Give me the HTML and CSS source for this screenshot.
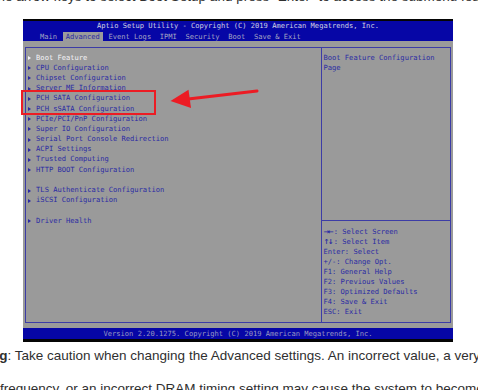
FILE: index.html
```html
<!DOCTYPE html>
<html lang="en">
<head>
    <meta charset="UTF-8">
    <meta name="viewport" content="width=device-width, initial-scale=1.0">
    <title>Advanced Setup</title>
    <link rel="stylesheet" href="styles.css">
</head>
<body>
    <div class="page">
        <p class="lead">Use the arrow keys to select Boot Setup and press "Enter" to access the submenu features.</p>

        <div class="bios">
            <div class="bios-title">Aptio Setup Utility - Copyright (C) 2019 American Megatrends, Inc.</div>
            <div class="bios-menu">
                <span>Main</span>
                <span class="active">Advanced</span>
                <span>Event Logs</span>
                <span>IPMI</span>
                <span>Security</span>
                <span>Boot</span>
                <span>Save &amp; Exit</span>
            </div>
            <div class="bios-body">
                <div class="panel">
                    <ul class="items">
                        <li class="sel">Boot Feature</li>
                        <li>CPU Configuration</li>
                        <li>Chipset Configuration</li>
                        <li>Server ME Information</li>
                        <li>PCH SATA Configuration</li>
                        <li>PCH sSATA Configuration</li>
                        <li>PCIe/PCI/PnP Configuration</li>
                        <li>Super IO Configuration</li>
                        <li>Serial Port Console Redirection</li>
                        <li>ACPI Settings</li>
                        <li>Trusted Computing</li>
                        <li>HTTP BOOT Configuration</li>
                        <li class="blank"></li>
                        <li>TLS Authenticate Configuration</li>
                        <li>iSCSI Configuration</li>
                        <li class="blank"></li>
                        <li>Driver Health</li>
                    </ul>
                    <div class="help">
                        <div class="help-desc">Boot Feature Configuration<br>Page</div>
                        <div class="help-keys">
                            <div><b>→←</b>: Select Screen</div>
                            <div><b>↑↓</b>: Select Item</div>
                            <div>Enter: Select</div>
                            <div>+/-: Change Opt.</div>
                            <div>F1: General Help</div>
                            <div>F2: Previous Values</div>
                            <div>F3: Optimized Defaults</div>
                            <div>F4: Save &amp; Exit</div>
                            <div>ESC: Exit</div>
                        </div>
                    </div>
                </div>
            </div>
            <div class="bios-foot">Version 2.20.1275. Copyright (C) 2019 American Megatrends, Inc.</div>
        </div>

        <p class="note">
            <span class="first"><strong>Warning</strong>: Take caution when changing the Advanced settings. An incorrect value, a very high DRAM</span>
            <span class="second">frequency, or an incorrect DRAM timing setting may cause the system to become unstable. When this occurs</span>
        </p>

        <!-- callout drawn over the screenshot -->
        <div class="callout"></div>
        <svg class="pointer" width="478" height="390" viewBox="0 0 478 390">
            <line x1="186" y1="99.2" x2="257" y2="91" stroke="#ec1c24" stroke-width="3" stroke-linecap="round"/>
            <polygon points="170.5,101 188.5,89.8 191,108" fill="#ec1c24"/>
        </svg>
    </div>
</body>
</html>
```

FILE: styles.css
```css
html, body {
    margin: 0;
    padding: 0;
    background: #ffffff;
    overflow: hidden;
}
.page {
    position: relative;
    width: 478px;
    height: 390px;
    overflow: hidden;
    font-family: "Liberation Sans", Arial, sans-serif;
    color: #2f2f2f;
}
.lead {
    margin: -10px 0 0 -34px;
    font-size: 13.5px;
    line-height: 14px;
    white-space: nowrap;
}
.bios {
    margin: 15px 0 0 23px;
    width: 430px;
    border-top: 2px solid #050505;
    border-bottom: 3px solid #050505;
    font-family: "DejaVu Sans Mono", "Liberation Mono", monospace;
    font-size: 7.1px;
}
.bios-title {
    height: 10px;
    line-height: 10px;
    background: #0606a6;
    color: #d2d2e2;
    text-align: center;
}
.bios-menu {
    display: flex;
    gap: 8.6px;
    height: 10px;
    line-height: 9px;
    padding-left: 17px;
    background: #0606a6;
    color: #a4a4c4;
}
.bios-menu span {
    margin-top: 1px;
}
.bios-menu .active {
    background: #9b9b9b;
    color: #2a2aa4;
    padding: 0 3px;
    margin: 1px -3px 0;
}
.bios-body {
    background: #9a9a9a;
    padding: 6px 2px 5px 2px;
}
.panel {
    display: grid;
    grid-template-columns: 296px 1fr;
    height: 274px;
    border: 1px solid #3c3ca6;
}
.items {
    list-style: none;
    margin: 0;
    padding: 4.6px 0 0 1.5px;
    border-right: 1px solid #3c3ca6;
    color: #2a2aa4;
}
.items li {
    height: 10.2px;
    line-height: 10.2px;
    white-space: nowrap;
}
.items li::before {
    content: "";
    display: inline-block;
    width: 0;
    height: 0;
    border-left: 3px solid #2a2aa4;
    border-top: 2.5px solid transparent;
    border-bottom: 2.5px solid transparent;
    margin-right: 5.6px;
    vertical-align: -0.5px;
}
.items li.sel {
    color: #f4f4f8;
}
.items li.sel::before {
    border-left-color: #f4f4f8;
}
.items li.blank::before {
    display: none;
}
.help {
    display: flex;
    flex-direction: column;
    color: #2a2aa4;
}
.help-desc {
    padding: 4.6px 0 0 1.5px;
    line-height: 10.2px;
}
.help-keys {
    margin-top: auto;
    border-top: 1px solid #3c3ca6;
    padding: 5.5px 0 4.5px 1.5px;
    line-height: 10.1px;
}
.help-keys b {
    font-family: "DejaVu Sans", sans-serif;
    font-weight: bold;
    font-size: 7px;
    letter-spacing: -1.5px;
    margin-right: 1.5px;
}
.bios-foot {
    height: 11px;
    line-height: 11px;
    background: #0606a6;
    color: #9a9ac2;
    text-align: center;
}
.note {
    margin: 0;
    font-size: 13.5px;
    line-height: 27px;
    white-space: nowrap;
}
.note span {
    display: block;
}
.note .first {
    margin-left: -46px;
}
.note .second {
    margin-top: 6px;
}
.callout {
    position: absolute;
    left: 21px;
    top: 90px;
    width: 131px;
    height: 21px;
    border: 2px solid #ec1c24;
}
.pointer {
    position: absolute;
    left: 0;
    top: 0;
}
```
